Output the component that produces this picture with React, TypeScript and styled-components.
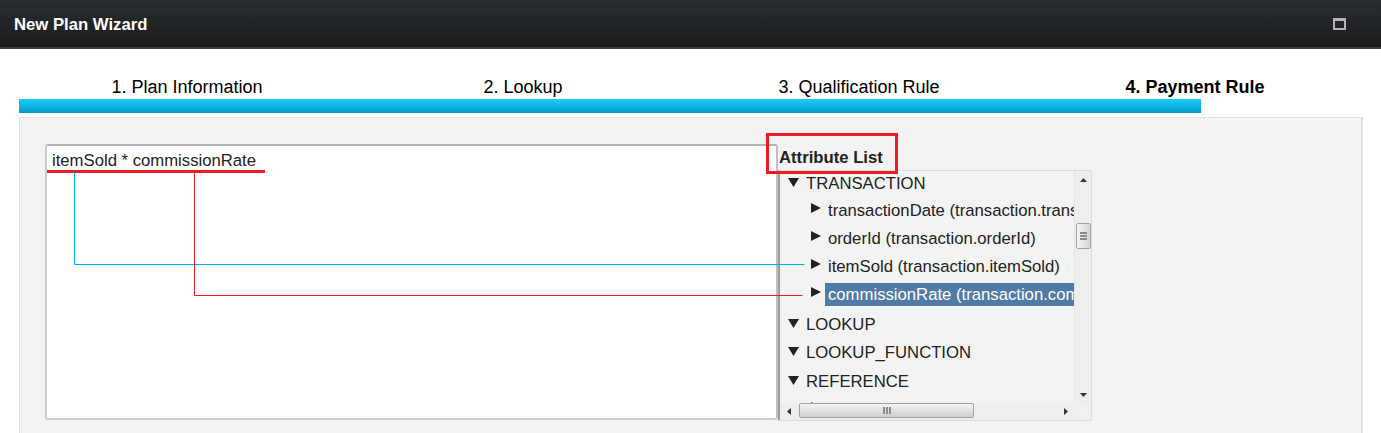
import React from "react";
import styled, { createGlobalStyle } from "styled-components";

const GlobalStyle = createGlobalStyle`
  html, body {
    margin: 0;
    padding: 0;
    background: #fff;
    overflow: hidden;
  }
  body {
    font-family: "Liberation Sans", Arial, sans-serif;
    color: #222;
  }
`;

const Page = styled.div`
  width: 1381px;
  height: 433px;
  overflow: hidden;
  position: relative;
`;

const TitleBar = styled.header`
  height: 47px;
  display: flex;
  align-items: center;
  justify-content: space-between;
  padding: 0 35px 0 14px;
  background: linear-gradient(#2a2e31, #1a1b1d);
  border-bottom: 2px solid #3d3d3d;
`;

const Title = styled.h1`
  margin: 0;
  padding-top: 2px;
  font-size: 16.7px;
  font-weight: bold;
  color: #fff;
`;

const MaximizeButton = styled.div`
  width: 9px;
  height: 7px;
  border: 2px solid #b5b5b5;
  border-top-width: 3px;
`;

const Wizard = styled.div`
  padding: 26px 18px 0 19px;
`;

const Steps = styled.div`
  display: grid;
  grid-template-columns: repeat(4, 336px);
  height: 24px;
`;

const Step = styled.div<{ $active?: boolean }>`
  text-align: center;
  font-size: 18px;
  line-height: 24px;
  color: #000;
  font-weight: ${(p) => (p.$active ? "bold" : "normal")};
`;

const ProgressBar = styled.div`
  width: 1182px;
  height: 14px;
  background: linear-gradient(#1ccdf6, #029bcb);
`;

const Panel = styled.div`
  margin-top: 4px;
  height: 340px;
  box-sizing: border-box;
  padding: 26px 0 0 25px;
  display: flex;
  align-items: flex-start;
  background: #f3f3f3;
  border: 1px solid #e2e2e2;
  border-right-width: 2px;
`;

const Editor = styled.div`
  box-sizing: border-box;
  width: 733px;
  height: 276px;
  padding: 5px 5px;
  background: #fff;
  border: 2px solid #cccccc;
  border-top-color: #b4b4b4;
  border-right-color: #c0c0c0;
  border-radius: 3px;
  font-size: 16.7px;
  line-height: 19px;
  color: #222;
`;

const AttributeColumn = styled.div`
  width: 314px;
  display: flex;
  flex-direction: column;
`;

const ColumnTitle = styled.div`
  height: 26px;
  padding: 4px 0 0 1px;
  box-sizing: border-box;
  font-size: 16.7px;
  line-height: 19px;
  font-weight: bold;
  color: #222;
`;

const TreeBox = styled.div`
  box-sizing: border-box;
  height: 251px;
  display: grid;
  grid-template-columns: 294px 17px;
  grid-template-rows: 232px 17px;
  border: 1px solid #dcdcdc;
  border-left: 2px solid #9c9c9c;
  border-bottom-width: 2px;
  background: #f3f3f3;
`;

const TreeViewport = styled.div`
  overflow: hidden;
  padding: 1px 0 0 8px;
`;

const Group = styled.div<{ $height?: number; $gap?: number }>`
  display: flex;
  align-items: center;
  height: ${(p) => p.$height ?? 28}px;
  margin-top: ${(p) => p.$gap ?? 0}px;
  font-size: 16.7px;
  color: #222;
  white-space: nowrap;
`;

const Item = styled.div<{ $gap?: number }>`
  display: flex;
  align-items: center;
  height: 28px;
  margin-top: ${(p) => p.$gap ?? 0}px;
  padding-left: 23px;
  font-size: 16.7px;
  white-space: nowrap;
  color: #222;
`;

const Caret = styled.svg<{ $lift: number }>`
  flex: none;
  margin-top: -${(p) => p.$lift}px;
  fill: #222;
`;

const Label = styled.span<{ $selected?: boolean }>`
  display: block;
  flex: 1;
  min-width: 0;
  overflow: hidden;
  height: 23px;
  line-height: 23px;
  padding-left: 3px;
  margin-left: 4px;
  background: ${(p) => (p.$selected ? "#517ba5" : "transparent")};
  color: ${(p) => (p.$selected ? "#fff" : "#222")};
`;

const GroupLabel = styled.span`
  margin-left: 7px;
`;

const VScroll = styled.div`
  display: flex;
  flex-direction: column;
  align-items: center;
  background: #eeeeee;
  border-left: 1px solid #e6e6e6;
`;

const HScroll = styled.div`
  display: flex;
  align-items: center;
  background: #eeeeee;
`;

const Corner = styled.div`
  background: #f0f0f0;
`;

const VThumb = styled.div`
  box-sizing: border-box;
  width: 15px;
  height: 26px;
  margin-top: 35px;
  display: flex;
  flex-direction: column;
  align-items: center;
  justify-content: center;
  gap: 1px;
  background: linear-gradient(90deg, #f6f6f6, #d4d4d4);
  border: 1px solid #a2a2a2;
  border-radius: 2px;
`;

const VGrip = styled.i`
  display: block;
  width: 7px;
  height: 2px;
  background: #8c8c8c;
`;

const HThumb = styled.div`
  box-sizing: border-box;
  width: 175px;
  height: 15px;
  margin-left: 2px;
  align-self: flex-start;
  display: flex;
  align-items: center;
  justify-content: center;
  gap: 1px;
  background: linear-gradient(#f4f4f4, #cfcfcf);
  border: 1px solid #a2a2a2;
  border-radius: 2px;
`;

const HGrip = styled.i`
  display: block;
  width: 2px;
  height: 7px;
  background: #8c8c8c;
`;

const ArrowSlot = styled.div`
  width: 17px;
  height: 17px;
  flex: none;
  display: flex;
  align-items: center;
  justify-content: center;
`;

const Spacer = styled.div`
  flex: 1;
`;

const Annotations = styled.svg`
  position: absolute;
  left: 0;
  top: 0;
  pointer-events: none;
`;

const Highlight = styled.div`
  position: absolute;
  left: 766px;
  top: 133px;
  width: 132px;
  height: 41px;
  box-sizing: border-box;
  border: 3px solid #ed1c24;
`;

const steps = ["1. Plan Information", "2. Lookup", "3. Qualification Rule", "4. Payment Rule"];

const attributes = [
  { label: "transactionDate (transaction.transactionDate)" },
  { label: "orderId (transaction.orderId)" },
  { label: "itemSold (transaction.itemSold)" },
  { label: "commissionRate (transaction.commissionRate)", selected: true },
];

const DownCaret = () => (
  <Caret $lift={3} width="11" height="9" viewBox="0 0 11 9">
    <path d="M0 0h11L5.5 9z" />
  </Caret>
);

const RightCaret = () => (
  <Caret $lift={4} width="10" height="10" viewBox="0 0 10 10">
    <path d="M0 0l10 5-10 5z" />
  </Caret>
);

const Arrow = ({ dir }: { dir: "up" | "down" | "left" | "right" }) => {
  const d = {
    up: "M3.5 0L7 4H0z",
    down: "M0 0h7L3.5 4z",
    left: "M4 0v7L0 3.5z",
    right: "M0 0l4 3.5L0 7z",
  }[dir];
  const vertical = dir === "up" || dir === "down";
  return (
    <svg width={vertical ? 7 : 4} height={vertical ? 4 : 7} viewBox={vertical ? "0 0 7 4" : "0 0 4 7"} fill="#333">
      <path d={d} />
    </svg>
  );
};

export default function App() {
  return (
    <Page>
      <GlobalStyle />
      <TitleBar>
        <Title>New Plan Wizard</Title>
        <MaximizeButton />
      </TitleBar>
      <Wizard>
        <Steps>
          {steps.map((s, i) => (
            <Step key={s} $active={i === 3}>
              {s}
            </Step>
          ))}
        </Steps>
        <ProgressBar />
        <Panel>
          <Editor>itemSold * commissionRate</Editor>
          <AttributeColumn>
            <ColumnTitle>Attribute List</ColumnTitle>
            <TreeBox>
              <TreeViewport>
                <Group $height={24}>
                  <DownCaret />
                  <GroupLabel>TRANSACTION</GroupLabel>
                </Group>
                {attributes.map((a) => (
                  <Item key={a.label}>
                    <RightCaret />
                    <Label $selected={a.selected}>{a.label}</Label>
                  </Item>
                ))}
                <Group $gap={3}>
                  <DownCaret />
                  <GroupLabel>LOOKUP</GroupLabel>
                </Group>
                <Group>
                  <DownCaret />
                  <GroupLabel>LOOKUP_FUNCTION</GroupLabel>
                </Group>
                <Group $gap={1}>
                  <DownCaret />
                  <GroupLabel>REFERENCE</GroupLabel>
                </Group>
                <Item $gap={-1}>
                  <RightCaret />
                  <Label>productCount</Label>
                </Item>
              </TreeViewport>
              <VScroll>
                <ArrowSlot>
                  <Arrow dir="up" />
                </ArrowSlot>
                <VThumb>
                  <VGrip />
                  <VGrip />
                  <VGrip />
                </VThumb>
                <Spacer />
                <ArrowSlot>
                  <Arrow dir="down" />
                </ArrowSlot>
              </VScroll>
              <HScroll>
                <ArrowSlot>
                  <Arrow dir="left" />
                </ArrowSlot>
                <HThumb>
                  <HGrip />
                  <HGrip />
                  <HGrip />
                </HThumb>
                <Spacer />
                <ArrowSlot>
                  <Arrow dir="right" />
                </ArrowSlot>
              </HScroll>
              <Corner />
            </TreeBox>
          </AttributeColumn>
        </Panel>
      </Wizard>
      <Annotations width="1381" height="433" fill="none">
        <path d="M47 171.500h218" stroke="#ed1c24" strokeWidth="3" />
        <path d="M74.500 172v92.500h730" stroke="#00aeef" strokeWidth="1" />
        <path d="M194.500 172v123.500h608" stroke="#ed1c24" strokeWidth="1" />
      </Annotations>
      <Highlight />
    </Page>
  );
}
